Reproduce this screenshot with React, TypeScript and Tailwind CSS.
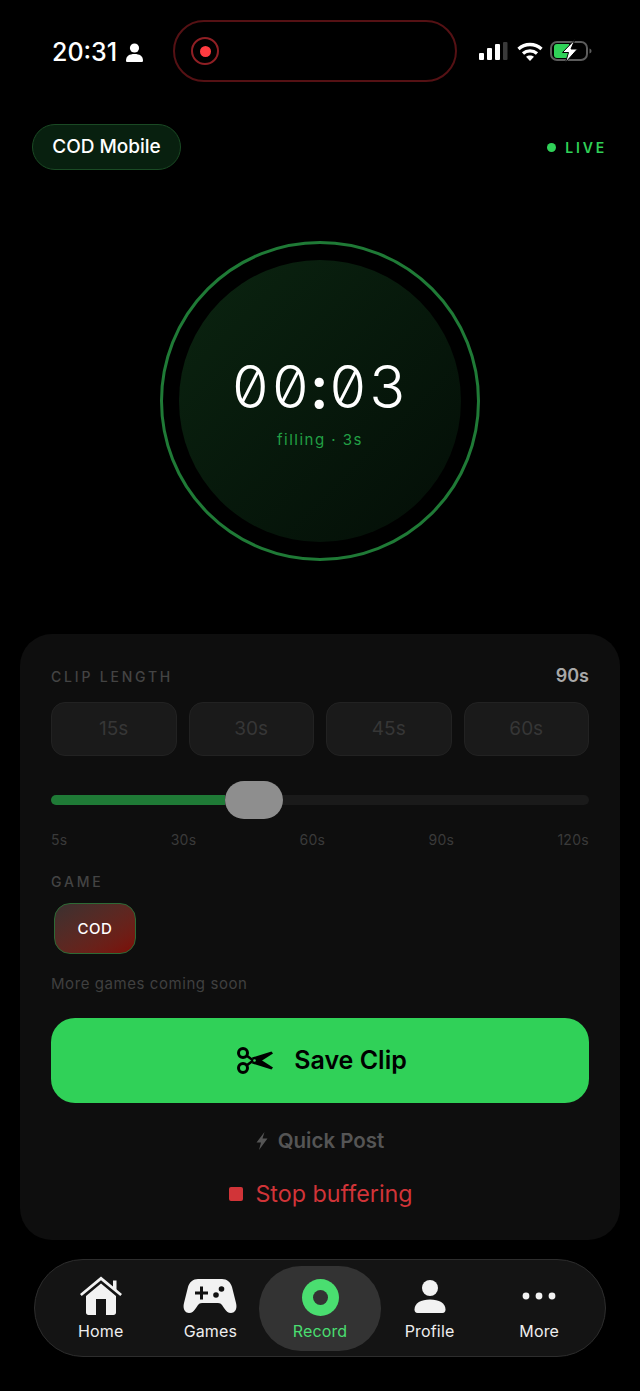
import React from "react";

const sans = "font-['Inter','Noto_Sans',sans-serif]";

function Signal() {
  return (
    <svg width="29" height="18" viewBox="0 0 29 18">
      <rect x="0" y="11" width="5" height="7" rx="1" fill="#fff" />
      <rect x="8" y="6" width="5" height="12" rx="1" fill="#fff" />
      <rect x="16" y="2" width="5" height="16" rx="1" fill="#fff" />
      <rect x="24" y="0" width="4.500" height="18" rx="1" fill="#3a3a3a" />
    </svg>
  );
}
function Wifi() {
  return (
    <svg width="26" height="19" viewBox="0 0 26 19" fill="none" stroke="#fff" strokeWidth="3.300">
      <path d="M1.500 7C8 1 18 1 24.500 7" />
      <path d="M6 11.500C10 8 16 8 20 11.500" />
      <path d="M13 19L9 14.800C11.300 13 14.700 13 17 14.800Z" fill="#fff" stroke="none" />
    </svg>
  );
}
function Battery() {
  return (
    <svg width="42" height="24" viewBox="0 0 42 24" fill="none">
      <rect x="1" y="3" width="36" height="18" rx="6" stroke="#5c5c5c" strokeWidth="2" />
      <path d="M4 8a3 3 0 0 1 3-3h12v14H7a3 3 0 0 1-3-3Z" fill="#30d158" />
      <path d="M39.500 9.500c1.500.5 2 1.500 2 2.500s-.5 2-2 2.500Z" fill="#5c5c5c" />
      <path d="M25 .5L12.500 13.500h6l-3 10L27.500 10h-6.500Z" fill="#fff" stroke="#000" strokeWidth="1" />
    </svg>
  );
}
function Person() {
  return (
    <svg width="17" height="19" viewBox="0 0 17 19" fill="#fff">
      <circle cx="8.500" cy="5" r="4.600" />
      <path d="M0 17.500c0-4.500 3.500-6.500 8.500-6.500s8.500 2 8.500 6.500c0 .9-.4 1.500-1 1.500H1c-.6 0-1-.6-1-1.500Z" />
    </svg>
  );
}
function Scissors() {
  return (
    <svg width="38" height="30" viewBox="0 0 38 30" fill="none">
      <circle cx="7" cy="7" r="4.500" stroke="#000" strokeWidth="3" />
      <circle cx="7" cy="22" r="4.500" stroke="#000" strokeWidth="3" />
      <path d="M10.500 19.500L20 12.500" stroke="#000" strokeWidth="2.600" />
      <path d="M10.500 9.500L20 16.500" stroke="#000" strokeWidth="2.600" />
      <path d="M16 11.500L35.500 5.500L37 7.500L23 16.500L17.500 16Z" fill="#000" />
      <path d="M16 17.500L35.500 23.500L37 21.500L23 12.500L17.500 13Z" fill="#000" />
      <circle cx="18.500" cy="14.500" r="1.300" fill="#30d158" />
    </svg>
  );
}
function Bolt() {
  return (
    <svg width="12" height="18" viewBox="0 0 12 18" fill="#555">
      <path d="M8.500 0L.5 10.500h4.500L3 18l8.500-11.500H6.500Z" />
    </svg>
  );
}
function HomeIcon() {
  return (
    <svg width="44" height="40" viewBox="0 0 44 40" fill="#f2f2f2">
      <path d="M34 4.500h3.500v11L34 12.500Z" />
      <path d="M22 .5L43 18l-1.700 2L22 4.300 2.700 20 1 18Z" />
      <path fillRule="evenodd" d="M22 7.500L37 20v16.500c0 1.500-1 2.500-2.500 2.500h-25C8 39 7 38 7 36.500V20ZM17 23v16h10V23Z" />
    </svg>
  );
}
function Gamepad() {
  return (
    <svg width="54" height="36" viewBox="0 0 54 36">
      <path
        d="M15 1h24c5 0 8.500 3 10 8L53 25c1.500 6-1 10-5 10-3 0-5-2-7-5l-2-3c-1-1.300-2-2-4-2H19c-2 0-3 .7-4 2l-2 3c-2 3-4 5-7 5-4 0-6.500-4-5-10L5 9C6.500 4 10 1 15 1Z"
        fill="#f2f2f2"
      />
      <path d="M17 8.500h3v5h5v3h-5v5h-3v-5h-5v-3h5Z" fill="#111" />
      <circle cx="33" cy="17" r="2.800" fill="#111" />
      <circle cx="38.500" cy="11" r="2.800" fill="#111" />
    </svg>
  );
}
function ProfileIcon() {
  return (
    <svg width="32" height="34" viewBox="0 0 32 34" fill="#f2f2f2">
      <circle cx="16" cy="9" r="8" />
      <path d="M.5 30.500C.5 24 7 20.500 16 20.500s15.500 3.500 15.500 10c0 2-1 3.500-3 3.500h-25c-2 0-3-1.500-3-3.500Z" />
    </svg>
  );
}
function Dots() {
  return (
    <svg width="34" height="8" viewBox="0 0 34 8" fill="#f2f2f2">
      <circle cx="4" cy="4" r="3.400" />
      <circle cx="17" cy="4" r="3.400" />
      <circle cx="30" cy="4" r="3.400" />
    </svg>
  );
}

function NavItem({ icon, label, active }: { icon: React.ReactNode; label: string; active?: boolean }) {
  return (
    <div className={`flex h-[85px] flex-col items-center rounded-[42px] ${active ? "-mx-[6px] bg-[#333333]" : ""}`}>
      <div className="flex h-[55px] w-full items-center justify-center pt-[6px]">{icon}</div>
      <div className={`text-[16px] leading-[20px] font-normal tracking-[0.01em] ${active ? "text-[#4ade70]" : "text-[#eeeeee]"}`}>{label}</div>
    </div>
  );
}

export default function App() {
  return (
    <div className={`h-[1391px] w-[640px] overflow-hidden bg-black ${sans}`}>
      <div className="mt-[20px] flex h-[62px] items-center">
        <div className="box-content flex w-[121px] items-center gap-[9px] pl-[52px] pt-[2px]">
          <span className="text-[25px] leading-none font-medium text-white">20:31</span>
          <Person />
        </div>
        <div className="flex h-[62px] w-[284px] items-center rounded-[31px] border-[2px] border-[#551114] pl-[16px]">
          <div className="flex h-[28px] w-[28px] items-center justify-center rounded-full border-[2px] border-[#8f1f24]">
            <div className="h-[11px] w-[11px] rounded-full bg-[#ff3b40]" />
          </div>
        </div>
        <div className="ml-[22px] flex items-center">
          <Signal />
          <div className="ml-[9px]">
            <Wifi />
          </div>
          <div className="ml-[7px]">
            <Battery />
          </div>
        </div>
      </div>

      <div className="mt-[42px] flex h-[46px] items-center justify-between pl-[32px] pr-[33px]">
        <div className="flex h-[46px] w-[149px] items-center justify-center rounded-full border border-[#1a4a24] bg-[#08200f] pt-[1px] text-[19px] font-medium text-white">
          COD Mobile
        </div>
        <div className="flex items-center gap-[9px]">
          <div className="h-[9px] w-[9px] rounded-full bg-[#30d158]" />
          <span className="text-[14px] font-semibold tracking-[0.2em] text-[#30d158]">LIVE</span>
        </div>
      </div>

      <div className="mt-[71px] flex justify-center">
        <div className="flex h-[320px] w-[320px] items-center justify-center rounded-full border-[3px] border-[#1f7a36]">
          <div className="flex h-[282px] w-[282px] flex-col items-center justify-center rounded-full bg-gradient-to-br from-[#0b2410] to-[#040e07]">
            <div className="text-[59px] leading-[70px] font-light tracking-[0.03em] text-white [font-feature-settings:'zero','tnum']">
              00<span className="font-semibold">:</span>03
            </div>
            <div className="mt-[8px] text-[15px] leading-[20px] tracking-[0.1em] text-[#22a045]">filling · 3s</div>
          </div>
        </div>
      </div>

      <div className="mx-[20px] mt-[73px] h-[606px] rounded-[32px] bg-[#0e0e0e] px-[31px] pt-[30px]">
        <div className="flex items-center justify-between">
          <span className="text-[14px] font-medium tracking-[0.2em] text-[#444444]">CLIP LENGTH</span>
          <span className="text-[18px] leading-[24px] font-semibold text-[#a8a8a8]">90s</span>
        </div>
        <div className="mt-[14px] grid grid-cols-4 gap-[12px]">
          {["15s", "30s", "45s", "60s"].map((t) => (
            <div key={t} className="flex h-[54px] items-center justify-center rounded-[14px] border border-[#222222] bg-[#1a1a1a] text-[19px] text-[#363636]">
              {t}
            </div>
          ))}
        </div>
        <div className="mt-[25px] flex h-[38px] items-center">
          <div className="h-[10px] w-[174px] rounded-l-full bg-[#1f7a36]" />
          <div className="h-[38px] w-[58px] shrink-0 rounded-[19px] bg-[#8e8e8e]" />
          <div className="h-[10px] flex-1 rounded-r-full bg-[#1a1a1a]" />
        </div>
        <div className="mt-[12px] flex justify-between text-[14px] leading-[18px] tracking-[0.02em] text-[#3a3a3a]">
          <span>5s</span>
          <span>30s</span>
          <span>60s</span>
          <span>90s</span>
          <span>120s</span>
        </div>
        <div className="mt-[25px] text-[14px] leading-[16px] font-medium tracking-[0.2em] text-[#444444]">GAME</div>
        <div className="ml-[3px] mt-[13px] flex h-[51px] w-[82px] items-center justify-center rounded-[16px] border border-[#2d6a35] bg-gradient-to-br from-[#3a3030] to-[#7d0a05] pt-[1px] text-[15px] font-medium tracking-[0.04em] text-white">
          COD
        </div>
        <div className="mt-[21px] text-[15px] leading-[18px] tracking-[0.038em] text-[#404040]">More games coming soon</div>
        <div className="mt-[25px] flex h-[85px] items-center justify-center gap-[20px] rounded-[24px] bg-[#30d158] pl-[3px]">
          <Scissors />
          <span className="text-[25px] font-semibold text-black">Save Clip</span>
        </div>
        <div className="mt-[25px] flex h-[26px] items-center justify-center gap-[10px] text-[20.5px] font-semibold text-[#555555]">
          <Bolt />
          <span>Quick Post</span>
        </div>
        <div className="mt-[25px] flex h-[30px] items-center justify-center gap-[12px] pl-[2px] text-[23.3px] text-[#d13438]">
          <div className="h-[14px] w-[14px] rounded-[2px] bg-[#d13438]" />
          <span>Stop buffering</span>
        </div>
      </div>

      <div className="mx-[34px] mt-[19px] grid h-[98px] grid-cols-5 items-center rounded-[49px] border border-[#2d2d2d] bg-[#141414] px-[11px]">
        <NavItem icon={<HomeIcon />} label="Home" />
        <NavItem icon={<Gamepad />} label="Games" />
        <NavItem
          icon={
            <svg width="38" height="39" viewBox="0 0 38 39">
              <circle cx="19.500" cy="20.500" r="18.500" fill="#4ade70" />
              <circle cx="19.500" cy="20.500" r="7.500" fill="#333333" />
            </svg>
          }
          label="Record"
          active
        />
        <NavItem icon={<ProfileIcon />} label="Profile" />
        <NavItem icon={<Dots />} label="More" />
      </div>
    </div>
  );
}
